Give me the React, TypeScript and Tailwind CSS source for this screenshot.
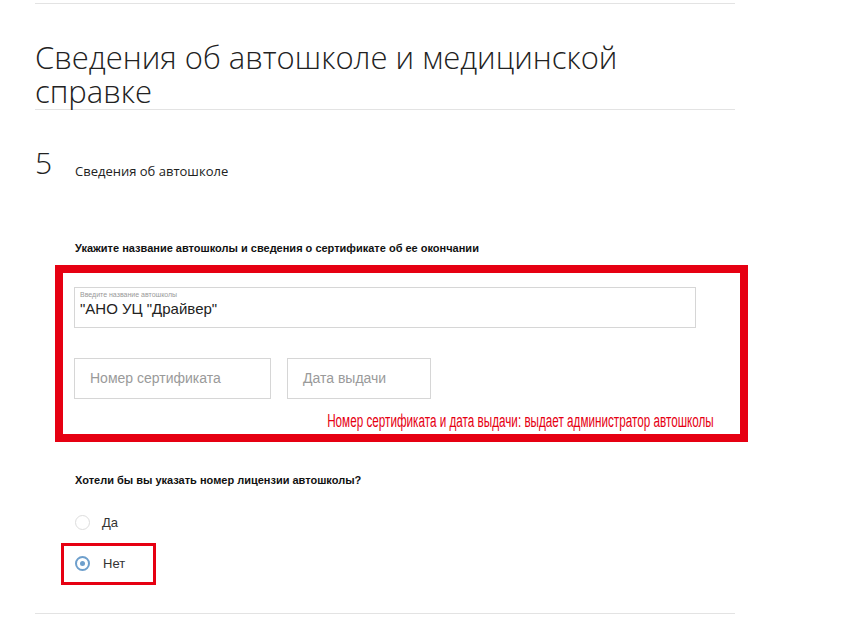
const App = () => {
  return (
    <div className="min-h-[620px] w-[850px] bg-white">
      <div className="ml-[35px] w-[700px] pt-[3px]">
        <div className="border-t border-[#e3e3e3]" />

        {/* Section title */}
        <h1 className="mt-[36px] border-b border-[#e3e3e3] pb-[1px] font-['Open_Sans',sans-serif] text-[31px] font-light leading-[34px] text-[#222]">
          Сведения об автошколе и медицинской
          <br />
          справке
        </h1>

        {/* Step */}
        <div className="mt-[36px] flex items-baseline">
          <span className="w-[40px] font-['Open_Sans',sans-serif] text-[30px] font-light leading-[34px] text-[#222]">5</span>
          <span className="relative top-[2px] font-['Open_Sans',sans-serif] text-[13px] text-[#222]">Сведения об автошколе</span>
        </div>

        <div className="mt-[60px] pl-[40px] font-['Liberation_Sans',sans-serif] text-[11px] font-bold text-[#111]">
          Укажите название автошколы и сведения о сертификате об ее окончании
        </div>

        {/* Highlighted block */}
        <div className="ml-[20px] mt-[8px] w-[693px] border-[8px] border-[#e60012] pl-[11px] pt-[14px] pb-[3px]">
          <div className="h-[41px] w-[622px] border border-[#d6d6d6] px-[5px] pt-[3px] font-['Liberation_Sans',sans-serif]">
            <div className="text-[7px] leading-[8px] text-[#999]">Введите название автошколы</div>
            <div className="mt-[1px] text-[15px] leading-[18px] text-[#222]">"АНО УЦ "Драйвер"</div>
          </div>
          <div className="mt-[30px] flex gap-[16px] font-['Liberation_Sans',sans-serif]">
            <div className="flex h-[41px] w-[197px] items-center border border-[#d6d6d6] pl-[15px] text-[14px] text-[#9a9a9a]">
              Номер сертификата
            </div>
            <div className="flex h-[41px] w-[144px] items-center border border-[#d6d6d6] pl-[15px] text-[14px] text-[#9a9a9a]">
              Дата выдачи
            </div>
          </div>
          <div className="mt-[12px] flex justify-end pr-[26px]">
            <span className="origin-right scale-x-[0.65] whitespace-nowrap font-['Liberation_Sans',sans-serif] text-[18px] leading-[20px] text-[#e60012]">
              Номер сертификата и дата выдачи: выдает администратор автошколы
            </span>
          </div>
        </div>

        <div className="mt-[30px] pl-[40px] font-['Liberation_Sans',sans-serif] text-[11px] font-bold text-[#111]">
          Хотели бы вы указать номер лицензии автошколы?
        </div>

        {/* Radios */}
        <div className="mt-[25px] flex items-center pl-[40px] font-['Liberation_Sans',sans-serif] text-[13px] text-[#333]">
          <span className="h-[15px] w-[15px] rounded-full border border-[#ddd] bg-white" />
          <span className="ml-[12px]">Да</span>
        </div>
        <div className="ml-[26px] mt-[10px] flex h-[42px] w-[95px] items-center border-[3px] border-[#e60012] pl-[11px] font-['Liberation_Sans',sans-serif] text-[13px] text-[#333]">
          <span className="flex h-[15px] w-[15px] items-center justify-center rounded-full border-[2px] border-[#6e9fcc]">
            <span className="h-[5px] w-[5px] rounded-full bg-[#6e9fcc]" />
          </span>
          <span className="ml-[13px]">Нет</span>
        </div>

        <div className="mt-[28px] border-t border-[#e3e3e3]" />
      </div>
    </div>
  );
};

export default App;
